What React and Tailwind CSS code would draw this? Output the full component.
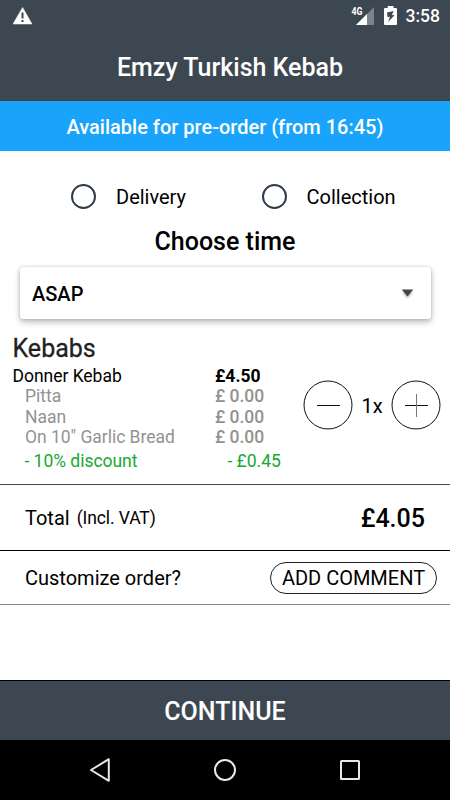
const extras = [
  { name: 'Pitta', price: '£ 0.00' },
  { name: 'Naan', price: '£ 0.00' },
  { name: 'On 10" Garlic Bread', price: '£ 0.00' },
];

function StatusBar() {
  return (
    <div className="flex h-[34px] items-start justify-between pl-[13px] pr-[10px]">
      <svg className="mt-[7px]" width="20" height="18" viewBox="0 0 20 18">
        <path d="M9.6 0.4 L19 17 H0 Z" fill="#fff" stroke="#fff" strokeWidth="0.5" strokeLinejoin="round" />
        <path d="M9.5 5.5 V11.6 M9.5 13 V15" stroke="#3d4751" strokeWidth="2" />
      </svg>
      <div className="flex items-start">
        <svg className="mt-[5px]" width="24" height="21" viewBox="0 0 24 21">
          <path d="M23 2 V20 H5 Z" fill="#7c838b" />
          <path d="M16 9 V20 H5 Z" fill="#fff" />
          <text x="0.5" y="10" fontFamily="Roboto" fontWeight="700" fontSize="10.5" textLength="11" lengthAdjust="spacingAndGlyphs" fill="#fff">4G</text>
        </svg>
        <svg className="ml-[9px] mt-[6px]" width="14" height="20" viewBox="0 0 14 20">
          <path d="M3.7 0 H9.5 V2 H12 Q13 2 13 3 V18 Q13 19 12 19 H1 Q0 19 0 18 V3 Q0 2 1 2 H3.7 Z" fill="#fff" />
          <path d="M9.6 5 L3 6.4 L3.6 11.2 L6 10.8 L4.1 16 L10.5 9.2 L7.9 9 Z" fill="#3d4751" />
        </svg>
        <span className="ml-[8px] mt-[6px] text-[17.5px] font-medium leading-[21px]">3:58</span>
      </div>
    </div>
  );
}

function Radio({ label, className }) {
  return (
    <label className={`flex items-center ${className}`}>
      <span className="size-[25px] rounded-full border-2 border-[#2f3b4c]" />
      <span className="ml-[20px] pt-[2px] text-[20px] leading-6">{label}</span>
    </label>
  );
}

function RoundButton({ plus }) {
  return (
    <button className="shrink-0">
      <svg className="block" width="50" height="50" viewBox="0 0 50 50" fill="none" stroke="#111">
        <circle cx="25" cy="25" r="24" strokeWidth="1" />
        <path d="M14 25.5 H37" />
        {plus && <path d="M25.5 14 V37" stroke="#777" />}
      </svg>
    </button>
  );
}

function OrderItem() {
  return (
    <section className="flex h-[120px] pl-[12.5px] pr-[9px]">
      <div className="w-[290.5px] shrink-0 pt-[1.5px] text-[17.5px] leading-[20.5px] tracking-[-0.03px]">
        <div className="flex">
          <span className="w-[202.5px]">Donner Kebab</span>
          <span className="font-bold">£4.50</span>
        </div>
        {extras.map((extra) => (
          <div key={extra.name} className="flex text-[#929292]">
            <span className="w-[202.5px] pl-[12.5px]">{extra.name}</span>
            <span className="font-medium">{extra.price}</span>
          </div>
        ))}
        <div className="flex pt-[3px] text-[#16a832]">
          <span className="w-[215px] pl-[12px]">- 10% discount</span>
          <span>- £0.45</span>
        </div>
      </div>
      <div className="mt-[16px] flex h-[50px] flex-1 items-center justify-between">
        <RoundButton />
        <span className="pt-[2px] text-[20px]">1x</span>
        <RoundButton plus />
      </div>
    </section>
  );
}

function NavBar() {
  return (
    <nav className="flex h-[60px] items-center justify-between bg-black px-[87px]">
      <svg width="26" height="26" viewBox="0 0 26 26" fill="none" stroke="#e8e8e8" strokeWidth="2">
        <path d="M21.8 2.2 V23.8 L4 13 Z" strokeLinejoin="round" />
      </svg>
      <svg width="26" height="26" viewBox="0 0 26 26" fill="none" stroke="#e8e8e8" strokeWidth="2">
        <circle cx="13" cy="13" r="10" />
      </svg>
      <svg width="26" height="26" viewBox="0 0 26 26" fill="none" stroke="#e8e8e8" strokeWidth="2">
        <rect x="4" y="4" width="18" height="18" rx="0.5" />
      </svg>
    </nav>
  );
}

export default function App() {
  return (
    <div className="flex h-[800px] w-[450px] flex-col overflow-hidden bg-white font-['Roboto',sans-serif] text-black">
      <header className="h-[101px] border-b border-[#40403c] bg-[#3d4751] text-white">
        <StatusBar />
        <h1 className="mt-[19px] pl-[10px] text-center text-[25px] font-medium leading-[30px]">Emzy Turkish Kebab</h1>
      </header>
      <div className="flex h-[50px] items-center justify-center bg-[#1aa3fa] pt-[2px] text-[20px] font-medium text-white">
        <span>Available for pre-order (from 16:45)</span>
      </div>

      <div className="flex h-[90px] flex-1 flex-col">
        <div className="mt-[32px] flex h-[26px] items-center pl-[71px]">
          <Radio label="Delivery" className="w-[190.5px]" />
          <Radio label="Collection" className="" />
        </div>
        <h2 className="mt-[18px] text-center text-[25px] font-medium leading-[30px]">Choose time</h2>
        <button className="ml-[19.5px] mt-[10px] flex h-[52px] w-[411px] items-center justify-between rounded-[3px] bg-white pl-[12.5px] pr-[17px] text-[20px] font-medium shadow-[0_3px_6px_rgba(0,0,0,0.28),0_0_3px_rgba(0,0,0,0.16)]">
          <span className="pt-[2px]">ASAP</span>
          <svg className="drop-shadow-[0_2px_1px_rgba(0,0,0,0.25)]" width="13" height="9" viewBox="0 0 13 9">
            <path d="M0.8 0.5 H12.2 L6.5 7.5 Z" fill="#444" />
          </svg>
        </button>
        <h3 className="mt-[13px] h-[32px] pl-[12.5px] pt-px text-[25px] leading-[32px] text-[#231f20] [-webkit-text-stroke:0.3px_#231f20]">Kebabs</h3>
        <OrderItem />

        <div className="flex h-[67px] items-center border-b border-t border-b-black border-t-[#444] pl-[25px] pr-[25px]">
          <span className="pt-px text-[20px]">Total</span>
          <span className="ml-[7px] pt-px text-[17.5px] tracking-[-0.1px]">(Incl. VAT)</span>
          <span className="ml-auto pt-[3px] text-[25px] font-medium">£4.05</span>
        </div>
        <div className="flex h-[54px] items-center justify-between border-b border-[#888] pl-[25px] pr-[13px] text-[20px]">
          <span className="pt-px">Customize order?</span>
          <button className="h-[32px] w-[167px] rounded-full border border-[#222] text-[20px] leading-[31px]">ADD COMMENT</button>
        </div>
      </div>

      <button className="h-[60px] border-t border-black bg-[#3d4751] pt-[2px] text-[25px] font-medium text-white">CONTINUE</button>
      <NavBar />
    </div>
  );
}
